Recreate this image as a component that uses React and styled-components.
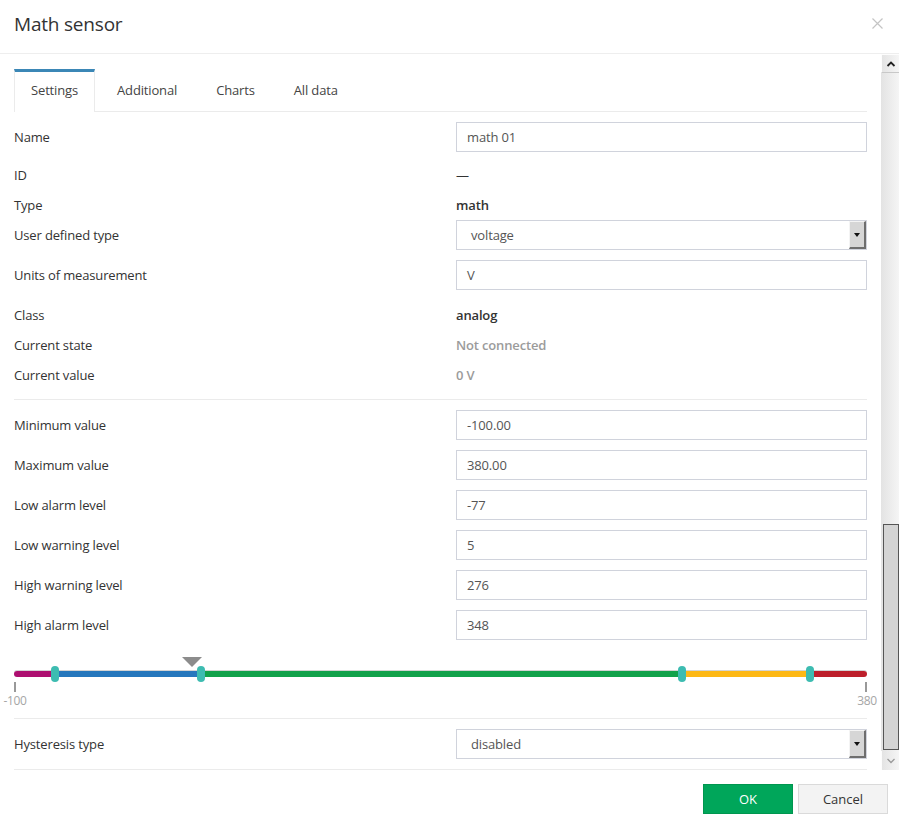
import React from "react";
import styled, { createGlobalStyle } from "styled-components";

const GlobalStyle = createGlobalStyle`
  body {
    margin: 0;
    font-family: "Open Sans", "Noto Sans", sans-serif;
    color: #444;
    background: #fff;
    letter-spacing: -0.15px;
  }
`;

const MIN = -100;
const MAX = 380;
const pct = v => ((v - MIN) / (MAX - MIN)) * 100 + "%";

const Dialog = styled.div`
  width: 899px;
  height: 825px;
  display: flex;
  flex-direction: column;
  background: #fff;
  overflow: hidden;
`;

const Header = styled.div`
  height: 54px;
  box-sizing: border-box;
  border-bottom: 1px solid #eeeeee;
  display: flex;
  align-items: center;
  justify-content: space-between;
  padding: 0 14px 6px 14px;
`;

const Title = styled.h1`
  margin: 0;
  font-size: 19px;
  font-weight: 400;
  color: #333;
  letter-spacing: -0.2px;
`;

const Close = styled.button`
  border: 0;
  background: none;
  padding: 0;
  margin-right: 2px;
  display: flex;
  cursor: pointer;
`;

const Body = styled.div`
  height: 716px;
  display: flex;
`;

const Content = styled.div`
  flex: 1;
  padding: 15px 14px 0 14px;
  overflow: hidden;
`;

const TabBar = styled.div`
  display: flex;
  height: 43px;
  box-sizing: border-box;
  border-bottom: 1px solid #ebebeb;
`;

const Tab = styled.div`
  padding: 0 16px 4px;
  margin-right: 5px;
  display: flex;
  align-items: center;
  font-size: 13px;
  color: #444;
  box-sizing: border-box;
  height: ${p => (p.$active ? "43px" : "42px")};
  border-top: 3px solid ${p => (p.$active ? "#3b87b6" : "transparent")};
  border-left: 1px solid ${p => (p.$active ? "#ebebeb" : "transparent")};
  border-right: 1px solid ${p => (p.$active ? "#ebebeb" : "transparent")};
  background: #fff;
`;

const Form = styled.div`
  padding-top: 10px;
`;

const Row = styled.div`
  display: grid;
  grid-template-columns: 442px 1fr;
  align-items: center;
  height: 30px;
  margin-bottom: ${p => p.$gap || 0}px;
`;

const Label = styled.div`
  font-size: 13px;
  color: #333;
`;

const Value = styled.div`
  font-size: 13px;
  font-weight: ${p => (p.$muted || p.$bold ? 600 : 400)};
  color: ${p => (p.$muted ? "#9b9b9b" : "#333")};
`;

const Input = styled.div`
  height: 30px;
  box-sizing: border-box;
  border: 1px solid #d0d3dc;
  padding: 0 10px;
  display: flex;
  align-items: center;
  font-size: 13px;
  color: #555;
`;

const Select = styled(Input)`
  padding: 0 0 0 14px;
  justify-content: space-between;
`;

const SelectArrow = styled.div`
  width: 17px;
  height: 28px;
  box-sizing: border-box;
  background: #d6d6d6;
  border-top: 1px solid #f4f4f4;
  border-left: 1px solid #f4f4f4;
  border-right: 2px solid #6e6e6e;
  border-bottom: 2px solid #6e6e6e;
  display: flex;
  align-items: center;
  justify-content: center;

  &::after {
    content: "";
    border-left: 3px solid transparent;
    border-right: 3px solid transparent;
    border-top: 4px solid #111;
  }
`;

const Section = styled.div`
  padding: ${p => (p.$first ? 0 : 10)}px 0 ${p => p.$bottom || 0}px;
  border-bottom: ${p => (p.$line ? "1px solid #ebebeb" : "none")};
`;

const Slider = styled.div`
  position: relative;
  height: 68px;
  border-bottom: 1px solid #ebebeb;
`;

const Track = styled.div`
  position: absolute;
  left: 0;
  right: 0;
  top: 21px;
  height: 6px;
  border-radius: 3px;
  overflow: hidden;
  display: flex;
  box-shadow: 0 -1px 0 #d4d4d4;
`;

const Segment = styled.div`
  background: ${p => p.$color};
`;

const Handle = styled.div`
  position: absolute;
  top: 16px;
  width: 8px;
  height: 16px;
  margin-left: -4px;
  border-radius: 4px;
  background: #3dbcb1;
`;

const Marker = styled.div`
  position: absolute;
  top: 7px;
  margin-left: -10px;
  border-left: 10px solid transparent;
  border-right: 10px solid transparent;
  border-top: 10px solid #8c8c8c;
`;

const Tick = styled.div`
  position: absolute;
  top: 32px;
  width: 2px;
  height: 10px;
  margin-left: ${p => (p.$end ? "-2px" : "0")};
  background: #999;
`;

const TickLabel = styled.div`
  position: absolute;
  top: 42px;
  transform: translateX(-50%);
  font-size: 12px;
  color: #a6a6a6;
  letter-spacing: -0.3px;
`;

const Footer = styled.div`
  flex: 1;
  display: flex;
  justify-content: flex-end;
  align-items: flex-start;
  gap: 5px;
  padding: 14px 11px 0 0;
`;

const Button = styled.button`
  width: 90px;
  height: 30px;
  font-family: inherit;
  font-size: 13px;
  border: 1px solid ${p => (p.$primary ? "#00964f" : "#dadada")};
  background: ${p => (p.$primary ? "#00a65a" : "#f3f3f3")};
  color: ${p => (p.$primary ? "#fff" : "#333")};
  cursor: pointer;
`;

const ScrollBar = styled.div`
  width: 18px;
  display: flex;
  flex-direction: column;
  background: linear-gradient(to right, #e3e3e3, #f5f5f5);
`;

const ScrollButton = styled.div`
  height: ${p => p.$h}px;
  box-sizing: border-box;
  display: flex;
  align-items: center;
  justify-content: center;
  border-top: ${p => (p.$up ? "1px solid #fdfdfd" : "none")};
  border-left: 1px solid #fdfdfd;
  border-bottom: ${p => (p.$up ? "1px solid #c8c8c8" : "none")};
`;

const ScrollTrack = styled.div`
  flex: 1;
  display: flex;
  flex-direction: column;
  justify-content: flex-end;
  padding: 0 0 1px 2px;
`;

const Thumb = styled.div`
  height: 226px;
  width: 16px;
  box-sizing: border-box;
  border: 1px solid #555;
  background: #d4d4d4;
`;

const Chevron = ({ up }) => (
  <svg width="10" height="6" viewBox="0 0 10 6">
    <path
      d={up ? "M1.5 5 L5 1.5 L8.5 5" : "M1.5 1 L5 4.5 L8.5 1"}
      fill="none"
      stroke={up ? "#222" : "#9a9a9a"}
      strokeWidth={up ? 1.8 : 1.3}
    />
  </svg>
);

const limits = [
  { label: "Minimum value", value: "-100.00" },
  { label: "Maximum value", value: "380.00" },
  { label: "Low alarm level", value: "-77" },
  { label: "Low warning level", value: "5" },
  { label: "High warning level", value: "276" },
  { label: "High alarm level", value: "348" }
];

const zones = [
  { from: -100, to: -77, color: "#ad0f70" },
  { from: -77, to: 5, color: "#2677bd" },
  { from: 5, to: 276, color: "#12a24b" },
  { from: 276, to: 348, color: "#fdb815" },
  { from: 348, to: 380, color: "#bd1f2b" }
];

export default function App() {
  return (
    <Dialog>
      <GlobalStyle />
      <Header>
        <Title>Math sensor</Title>
        <Close>
          <svg width="11" height="11" viewBox="0 0 11 11">
            <path d="M0.5 0.5 L10.5 10.5 M10.5 0.5 L0.5 10.5" stroke="#c4c4c4" strokeWidth="1.2" />
          </svg>
        </Close>
      </Header>
      <Body>
        <Content>
          <TabBar>
            <Tab $active>Settings</Tab>
            <Tab>Additional</Tab>
            <Tab>Charts</Tab>
            <Tab>All data</Tab>
          </TabBar>
          <Form>
            <Section $first $line $bottom={9}>
              <Row $gap={8}>
                <Label>Name</Label>
                <Input>math 01</Input>
              </Row>
              <Row>
                <Label>ID</Label>
                <Value>—</Value>
              </Row>
              <Row>
                <Label>Type</Label>
                <Value $bold>math</Value>
              </Row>
              <Row $gap={10}>
                <Label>User defined type</Label>
                <Select>
                  voltage
                  <SelectArrow />
                </Select>
              </Row>
              <Row $gap={10}>
                <Label>Units of measurement</Label>
                <Input>V</Input>
              </Row>
              <Row>
                <Label>Class</Label>
                <Value $bold>analog</Value>
              </Row>
              <Row>
                <Label>Current state</Label>
                <Value $muted>Not connected</Value>
              </Row>
              <Row>
                <Label>Current value</Label>
                <Value $muted>0 V</Value>
              </Row>
            </Section>
            <Section>
              {limits.map(l => (
                <Row key={l.label} $gap={10}>
                  <Label>{l.label}</Label>
                  <Input>{l.value}</Input>
                </Row>
              ))}
            </Section>
            <Slider>
              <Marker style={{ left: pct(0) }} />
              <Track>
                {zones.map(z => (
                  <Segment
                    key={z.color}
                    $color={z.color}
                    style={{ width: ((z.to - z.from) / (MAX - MIN)) * 100 + "%" }}
                  />
                ))}
              </Track>
              {[-77, 5, 276, 348].map(v => (
                <Handle key={v} style={{ left: pct(v) }} />
              ))}
              <Tick style={{ left: 0 }} />
              <Tick $end style={{ left: "100%" }} />
              <TickLabel style={{ left: 1 }}>-100</TickLabel>
              <TickLabel style={{ left: "100%" }}>380</TickLabel>
            </Slider>
            <Section $line $bottom={10}>
              <Row>
                <Label>Hysteresis type</Label>
                <Select>
                  disabled
                  <SelectArrow />
                </Select>
              </Row>
            </Section>
          </Form>
        </Content>
        <ScrollBar>
          <ScrollButton $up $h={19}>
            <Chevron up />
          </ScrollButton>
          <ScrollTrack>
            <Thumb />
          </ScrollTrack>
          <ScrollButton $h={19}>
            <Chevron />
          </ScrollButton>
        </ScrollBar>
      </Body>
      <Footer>
        <Button $primary>OK</Button>
        <Button>Cancel</Button>
      </Footer>
    </Dialog>
  );
}
